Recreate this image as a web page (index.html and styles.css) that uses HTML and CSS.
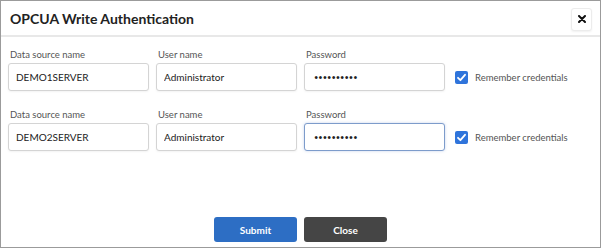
FILE: index.html
```html
<!DOCTYPE html>
<html lang="en">
<head>
  <meta charset="UTF-8" />
  <title>OPCUA Write Authentication</title>
  <link rel="stylesheet" href="styles.css">
</head>
<body>
  <div class="dialog">
    <header>
      <h1>OPCUA Write Authentication</h1>
      <button class="close-x" type="button">
        <svg width="8" height="8" viewBox="0 0 8 8"><path d="M1 1L7 7M7 1L1 7" stroke="#111" stroke-width="2" stroke-linecap="round"/></svg>
      </button>
    </header>

    <div class="form">
      <div class="row">
        <div class="field">
          <label>Data source name</label>
          <input type="text" value="DEMO1SERVER" />
        </div>
        <div class="field">
          <label>User name</label>
          <input type="text" value="Administrator" />
        </div>
        <div class="field">
          <label>Password</label>
          <input type="password" value="1234567890" />
        </div>
        <div class="remember">
          <span class="check">
            <svg width="11" height="11" viewBox="0 0 11 11"><path d="M2 5.8L4.4 8.2L9 2.8" fill="none" stroke="#fff" stroke-width="1.8" stroke-linecap="round" stroke-linejoin="round"/></svg>
          </span>
          Remember credentials
        </div>
      </div>

      <div class="row">
        <div class="field">
          <label>Data source name</label>
          <input type="text" value="DEMO2SERVER" />
        </div>
        <div class="field">
          <label>User name</label>
          <input type="text" value="Administrator" />
        </div>
        <div class="field">
          <label>Password</label>
          <input type="password" class="focused" value="1234567890" />
        </div>
        <div class="remember">
          <span class="check">
            <svg width="11" height="11" viewBox="0 0 11 11"><path d="M2 5.8L4.4 8.2L9 2.8" fill="none" stroke="#fff" stroke-width="1.8" stroke-linecap="round" stroke-linejoin="round"/></svg>
          </span>
          Remember credentials
        </div>
      </div>
    </div>

    <div class="actions">
      <button class="btn submit" type="button">Submit</button>
      <button class="btn close" type="button">Close</button>
    </div>
  </div>
</body>
</html>
```

FILE: styles.css
```css
body {
  margin: 0;
  font-family: 'Lato', 'Noto Sans', sans-serif;
  background: #fff;
}
.dialog {
  width: 599px;
  height: 246px;
  border: 1px solid #9b9b9b;
  display: flex;
  flex-direction: column;
}
header {
  display: flex;
  justify-content: space-between;
  align-items: center;
  height: 34px;
  padding: 0 8px 0 9px;
  border-bottom: 2px solid #e8e8e8;
}
h1 {
  margin: 0;
  font-size: 14px;
  font-weight: 700;
  color: #222;
}
.close-x {
  width: 21px;
  height: 23px;
  margin-top: 2px;
  padding: 0;
  border: 1px solid #ececec;
  border-radius: 3px;
  background: #fff;
  box-shadow: 0 1px 2px rgba(0,0,0,0.06);
  display: flex;
  align-items: center;
  justify-content: center;
}
.form {
  padding: 10px 0 0 7px;
}
.row {
  display: flex;
  align-items: flex-end;
  gap: 7px;
  margin-bottom: 16px;
}
.field {
  display: flex;
  flex-direction: column;
  width: 141px;
}
.field label {
  font-size: 9.5px;
  color: #555;
  height: 16px;
  line-height: 16px;
  padding-left: 2px;
}
.field input {
  box-sizing: border-box;
  height: 28px;
  margin: 0;
  padding: 0 7px;
  border: 1px solid #d4d4d4;
  border-radius: 3px;
  font-family: inherit;
  font-size: 10px;
  color: #222;
  outline: none;
  box-shadow: 0 1px 2px rgba(0,0,0,0.05);
}
.field input[type=password] {
  font-size: 7.5px;
  padding-left: 9px;
}
.field input.focused {
  border-color: #7d9ccb;
  box-shadow: 0 0 3px rgba(90,130,200,0.35);
}
.remember {
  display: flex;
  align-items: center;
  gap: 7px;
  height: 28px;
  margin-left: 3px;
  font-size: 9.5px;
  color: #555;
}
.check {
  width: 13px;
  height: 13px;
  border-radius: 2px;
  background: #2f74db;
  display: flex;
  align-items: center;
  justify-content: center;
}
.actions {
  margin-top: auto;
  margin-bottom: 5px;
  display: flex;
  justify-content: center;
  gap: 7px;
}
.btn {
  width: 83px;
  height: 25px;
  border: none;
  border-radius: 3px;
  color: #fff;
  font-family: inherit;
  font-size: 10px;
  font-weight: 700;
}
.submit {
  background: #2d6ec4;
}
.close {
  background: #454545;
}
```
